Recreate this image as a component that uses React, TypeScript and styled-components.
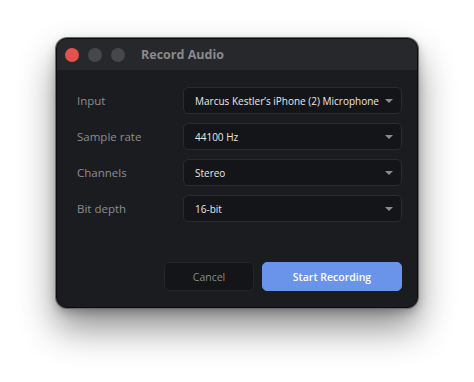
import React from "react";
import styled, { createGlobalStyle } from "styled-components";

const Global = createGlobalStyle`
  html, body { margin: 0; padding: 0; background: #ffffff; }
  body { font-family: "Open Sans", "DejaVu Sans", sans-serif; }
`;

const Page = styled.div`
  display: flex;
  justify-content: center;
  padding-top: 38px;
  height: 382px;
  box-sizing: border-box;
`;

const Window = styled.div`
  width: 362px;
  height: 270px;
  box-sizing: border-box;
  border-radius: 11px;
  background: #1b1c20;
  border: 1px solid #0c0c0e;
  box-shadow: 0 0 0 1px #6b6b6e, 0 20px 36px rgba(0, 0, 0, 0.45), 0 4px 10px rgba(0, 0, 0, 0.25);
  display: flex;
  flex-direction: column;
  overflow: hidden;
`;

const TitleBar = styled.div`
  height: 31px;
  flex: none;
  background: #27282b;
  display: flex;
  align-items: center;
  padding-left: 8px;
  gap: 9px;
`;

const Light = styled.span<{ $c: string }>`
  width: 14px;
  height: 14px;
  border-radius: 50%;
  background: ${(p) => p.$c};
  flex: none;
`;

const Title = styled.div`
  margin-left: 7px;
  font-family: "Open Sans", sans-serif;
  font-size: 12.5px;
  font-weight: 700;
  color: #8a8a8c;
`;

const Body = styled.div`
  flex: 1;
  display: flex;
  flex-direction: column;
  padding: 17px 15px 16px 20px;
`;

const Form = styled.div`
  display: grid;
  grid-template-columns: 106px 1fr;
  row-gap: 9px;
  align-items: center;
`;

const Label = styled.div`
  font-size: 11.5px;
  color: #8d8d90;
`;

const Select = styled.div`
  height: 27px;
  box-sizing: border-box;
  background: #141518;
  border: 1px solid #2a2b2f;
  border-radius: 5px;
  display: flex;
  align-items: center;
  justify-content: space-between;
  padding: 0 8px 0 11px;
  font-size: 10px;
  font-weight: 500;
  color: #e8e8ea;
  white-space: nowrap;
  overflow: hidden;
`;

const Caret = styled.span`
  width: 0;
  height: 0;
  border-left: 4px solid transparent;
  border-right: 4px solid transparent;
  border-top: 4px solid #8b8b8e;
  margin-left: 6px;
  flex: none;
`;

const Footer = styled.div`
  margin-top: auto;
  display: flex;
  justify-content: flex-end;
  gap: 8px;
`;

const Button = styled.button<{ $primary?: boolean }>`
  height: 29px;
  width: ${(p) => (p.$primary ? "140px" : "90px")};
  border-radius: 5px;
  font-family: "Open Sans", sans-serif;
  font-size: 10.5px;
  font-weight: ${(p) => (p.$primary ? 600 : 400)};
  border: 1px solid ${(p) => (p.$primary ? "#6a93ea" : "#25262a")};
  background: ${(p) => (p.$primary ? "#6a93ea" : "#141518")};
  color: ${(p) => (p.$primary ? "#ffffff" : "#8a8a8d")};
  padding: 0;
`;

const fields = [
  ["Input", "Marcus Kestler’s iPhone (2) Microphone"],
  ["Sample rate", "44100 Hz"],
  ["Channels", "Stereo"],
  ["Bit depth", "16-bit"],
];

export default function App() {
  return (
    <>
      <Global />
      <Page>
        <Window>
          <TitleBar>
            <Light $c="#e5524d" />
            <Light $c="#46474a" />
            <Light $c="#46474a" />
            <Title>Record Audio</Title>
          </TitleBar>
          <Body>
            <Form>
              {fields.map(([l, v]) => (
                <React.Fragment key={l}>
                  <Label>{l}</Label>
                  <Select>
                    <span>{v}</span>
                    <Caret />
                  </Select>
                </React.Fragment>
              ))}
            </Form>
            <Footer>
              <Button>Cancel</Button>
              <Button $primary>Start Recording</Button>
            </Footer>
          </Body>
        </Window>
      </Page>
    </>
  );
}
